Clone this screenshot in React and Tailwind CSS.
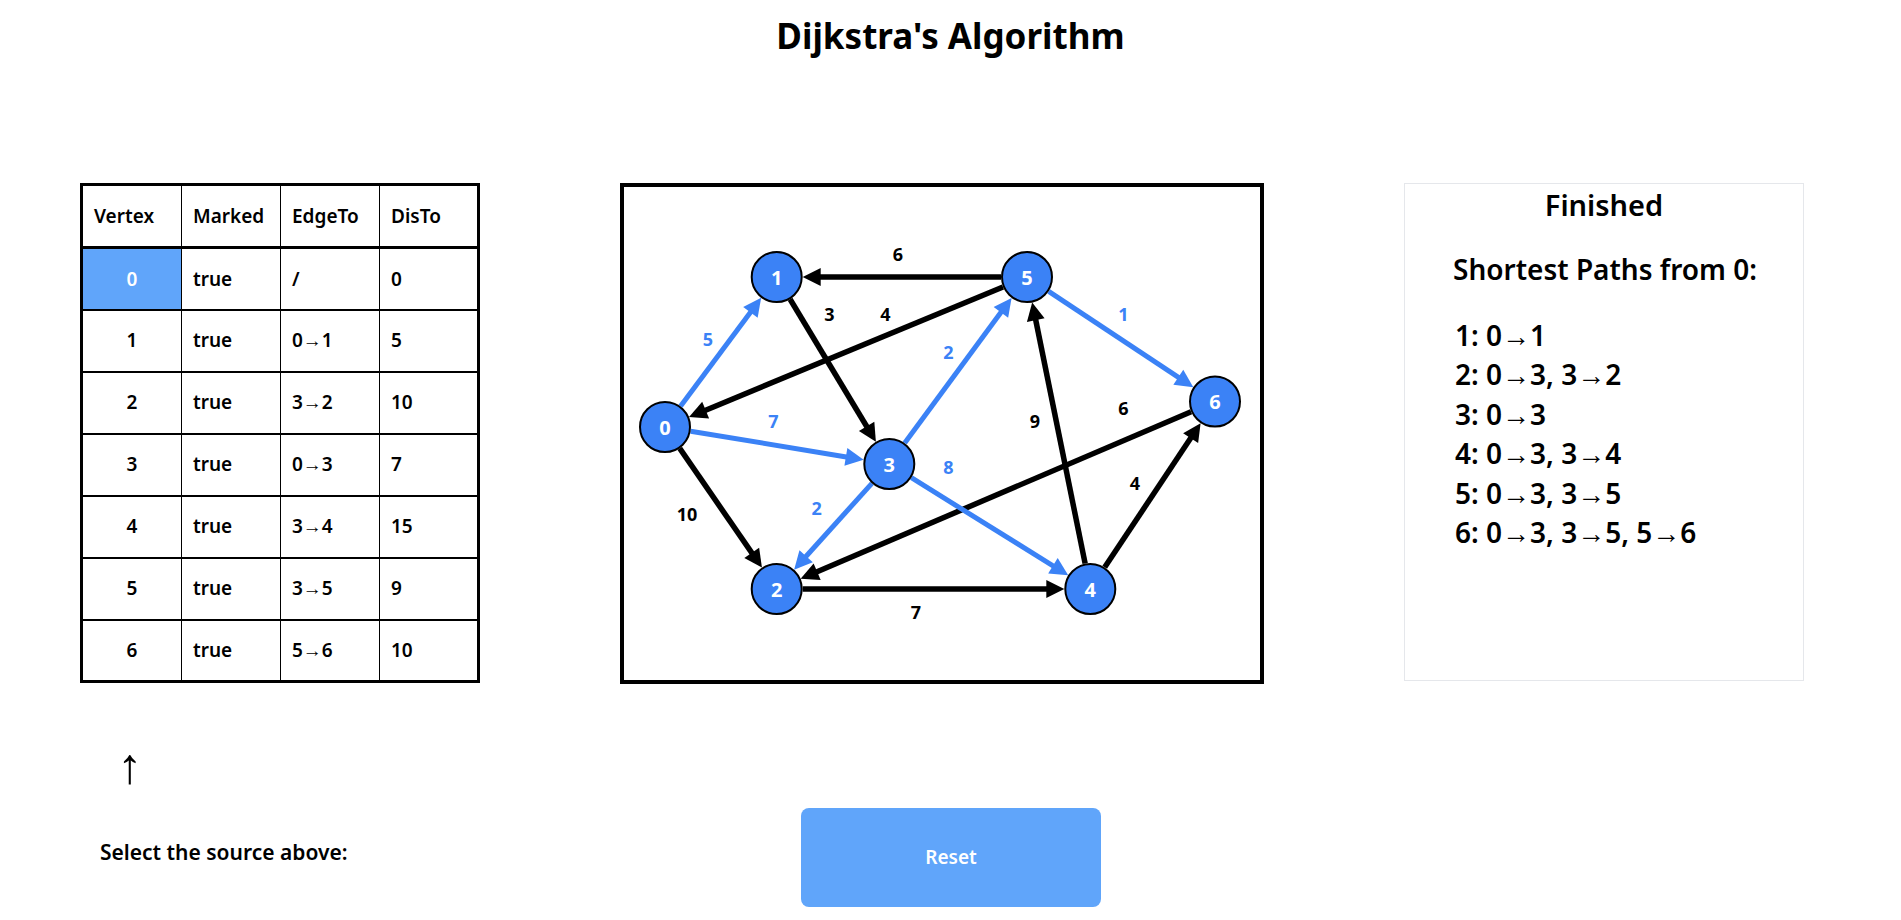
import React from "react";

const NODES = {
  0: [41, 240],
  1: [152.7, 90],
  2: [152.7, 402],
  3: [265.3, 277],
  4: [466.3, 402],
  5: [403, 90],
  6: [591, 214.5],
};

const EDGES = [
  { f: 0, t: 1, w: 5, blue: true, lx: 84, ly: 152 },
  { f: 1, t: 3, w: 3, lx: 205.3, ly: 127 },
  { f: 5, t: 0, w: 4, lx: 261.3, ly: 127 },
  { f: 5, t: 1, w: 6, lx: 274, ly: 67 },
  { f: 0, t: 3, w: 7, blue: true, lx: 149.3, ly: 234.3 },
  { f: 0, t: 2, w: 10, lx: 63, ly: 327 },
  { f: 3, t: 2, w: 2, blue: true, lx: 192.7, ly: 321.3 },
  { f: 6, t: 2, w: 6, lx: 499.3, ly: 221.3 },
  { f: 2, t: 4, w: 7, lx: 292, ly: 425.3 },
  { f: 3, t: 5, w: 2, blue: true, lx: 324.3, ly: 164.7 },
  { f: 3, t: 4, w: 8, blue: true, lx: 324.3, ly: 280.3 },
  { f: 4, t: 5, w: 9, lx: 411, ly: 234.3 },
  { f: 5, t: 6, w: 1, blue: true, lx: 499.3, ly: 127 },
  { f: 4, t: 6, w: 4, lx: 511, ly: 296 },
];

const ROWS = [
  [0, "/", 0],
  [1, "0→1", 5],
  [2, "3→2", 10],
  [3, "0→3", 7],
  [4, "3→4", 15],
  [5, "3→5", 9],
  [6, "5→6", 10],
];

const PATHS = [
  "1: 0→1",
  "2: 0→3, 3→2",
  "3: 0→3",
  "4: 0→3, 3→4",
  "5: 0→3, 3→5",
  "6: 0→3, 3→5, 5→6",
];

const BLUE = "#3b82f6";
const R = 26;

function Edge({ e }) {
  const [x1, y1] = NODES[e.f];
  const [x2, y2] = NODES[e.t];
  const dx = x2 - x1;
  const dy = y2 - y1;
  const len = Math.hypot(dx, dy);
  const ux = dx / len;
  const uy = dy / len;
  const sx = x1 + ux * R;
  const sy = y1 + uy * R;
  const tx = x2 - ux * R;
  const ty = y2 - uy * R;
  const al = 18;
  const aw = 9;
  const bx = tx - ux * al;
  const by = ty - uy * al;
  const px = -uy;
  const py = ux;
  const color = e.blue ? BLUE : "#000";
  return (
    <g>
      <line
        x1={sx}
        y1={sy}
        x2={bx + ux * 2}
        y2={by + uy * 2}
        stroke={color}
        strokeWidth={e.blue ? 5 : 5.5}
      />
      <polygon
        points={`${tx},${ty} ${bx + px * aw},${by + py * aw} ${bx - px * aw},${by - py * aw}`}
        fill={color}
      />
    </g>
  );
}

function Graph() {
  return (
    <svg width="636" height="493" viewBox="0 0 636 493" className="block">
      {EDGES.map((e, i) => (
        <Edge key={i} e={e} />
      ))}
      {EDGES.map((e, i) => (
        <text
          key={"l" + i}
          x={e.lx}
          y={e.ly}
          textAnchor="middle"
          dominantBaseline="central"
          fontSize="18"
          fontWeight="700"
          fill={e.blue ? BLUE : "#000"}
        >
          {e.w}
        </text>
      ))}
      {Object.entries(NODES).map(([k, [x, y]]) => (
        <g key={k}>
          <circle cx={x} cy={y} r={R - 1} fill={BLUE} stroke="#000" strokeWidth="2" />
          <text
            x={x}
            y={y}
            textAnchor="middle"
            dominantBaseline="central"
            fontSize="20"
            fontWeight="700"
            fill="#fff"
          >
            {k}
          </text>
        </g>
      ))}
    </svg>
  );
}

export default function App() {
  return (
    <div className="min-h-screen bg-white text-black font-['Noto_Sans',sans-serif]">
      <h1 className="pt-[15px] text-center text-[35px] font-bold leading-[42px]">
        Dijkstra's Algorithm
      </h1>

      <div className="mt-[126px] flex items-start pl-[80px]">
        <table className="w-[400px] table-fixed border-collapse border-[3px] border-black text-[19px] font-semibold">
          <thead>
            <tr className="h-[63px] border-b-[3px] border-black">
              <th className="w-[100px] border-r border-black pl-[11px] text-left font-semibold">Vertex</th>
              <th className="w-[99px] border-r border-black pl-[11px] text-left font-semibold">Marked</th>
              <th className="w-[99px] border-r border-black pl-[11px] text-left font-semibold">EdgeTo</th>
              <th className="pl-[11px] text-left font-semibold">DisTo</th>
            </tr>
          </thead>
          <tbody>
            {ROWS.map(([v, e, d]) => (
              <tr key={v} className="h-[62px] border-b-2 border-black last:border-b-0">
                <td
                  className={
                    v === 0
                      ? "border-r border-black bg-[#60a5fa] text-center text-white"
                      : "border-r border-black text-center"
                  }
                >
                  {v}
                </td>
                <td className="border-r border-black pl-[11px]">true</td>
                <td className="border-r border-black pl-[11px]">{e}</td>
                <td className="pl-[11px]">{d}</td>
              </tr>
            ))}
          </tbody>
        </table>

        <div className="ml-[140px] h-[501px] w-[644px] border-4 border-black">
          <Graph />
        </div>

        <div className="ml-[140px] h-[498px] w-[400px] border border-gray-200 font-semibold">
          <div className="mt-[1px] text-center text-[29px] leading-[40px]">Finished</div>
          <div className="mt-[24px] pl-[48px] text-[28px] leading-[40px]">Shortest Paths from 0:</div>
          <div className="mt-[27px] pl-[50px] text-[28px] leading-[39.4px]">
            {PATHS.map((p) => (
              <div key={p}>{p}</div>
            ))}
          </div>
        </div>
      </div>

      <div className="flex items-start pl-[80px]">
        <div className="w-[400px]">
          <div className="mt-[57px] w-[100px] text-center font-['Liberation_Sans',sans-serif] text-[50px] font-normal leading-[50px]">
            ↑
          </div>
          <div className="mt-[45px] pl-[20px] text-[21px] font-semibold leading-[32px]">
            Select the source above:
          </div>
        </div>
        <button className="ml-[321px] mt-[124px] h-[99px] w-[300px] rounded-lg bg-[#60a5fa] text-[19px] font-semibold text-white">
          Reset
        </button>
      </div>
    </div>
  );
}
